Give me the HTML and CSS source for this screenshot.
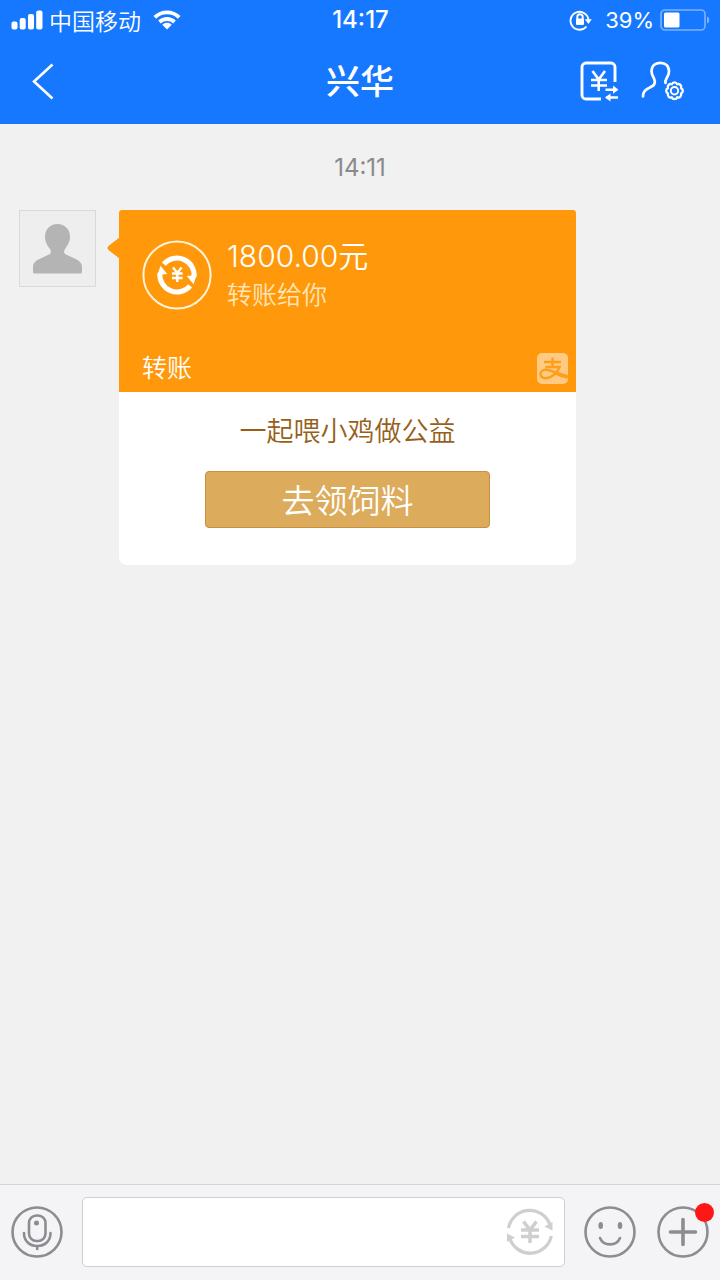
FILE: index.html
```html
<!DOCTYPE html>
<html lang="zh-CN">
<head>
<meta charset="utf-8">
<meta name="viewport" content="width=device-width, initial-scale=1">
<title>兴华</title>
<link rel="stylesheet" href="styles.css">
</head>
<body>
<div class="app">
  <header class="header">
    <div class="status">
      <div class="status-left">
        <svg class="icon" width="32" height="20" viewBox="0 0 32 20" fill="#fff" aria-hidden="true">
          <rect x="0.5" y="11.5" width="6" height="8" rx="2"/><rect x="8.7" y="8" width="6" height="11.5" rx="2"/><rect x="17" y="4" width="6" height="15.5" rx="2"/><rect x="25.2" y="0.5" width="6.3" height="19" rx="2"/>
        </svg>
        <span class="carrier">中国移动</span>
        <svg class="icon wifi" width="28" height="20" viewBox="0 0 28 20" aria-hidden="true">
          <g fill="none" stroke="#fff" stroke-width="3.8"><path d="M1.8 7.3C8.5.6 19.500.6 26.200 7.300"/><path d="M6.500 12C10.700 8 17.300 8 21.500 12"/></g>
          <path d="M9.300 14.700c2.700-2.500 6.700-2.500 9.400 0L14 19.600z" fill="#fff"/>
        </svg>
      </div>
      <time class="clock">14:17</time>
      <div class="status-right">
        <svg class="icon" width="24" height="22" viewBox="0 0 24 22" aria-hidden="true">
          <g fill="none" stroke="#fff" stroke-width="1.900"><path d="M17.500 17.500A9 9 0 1 1 19.500 11"/><path d="M8.300 10.500V8a2.700 2.700 0 0 1 5.400 0v2.500"/></g>
          <rect x="7" y="9.500" width="8" height="6.500" rx="1" fill="#fff"/><path d="M15.800 10.300h7L19.500 15z" fill="#fff"/>
        </svg>
        <span class="percent">39%</span>
        <svg class="icon" width="50" height="22" viewBox="0 0 50 22" aria-hidden="true">
          <rect x="1" y="1" width="44" height="20" rx="4" fill="none" stroke="#7db3ff" stroke-width="1.600"/>
          <rect x="4" y="3.500" width="15.500" height="15" rx="1.500" fill="#fff"/><path d="M47 7.500c3 1 3 6 0 7z" fill="#7db3ff"/>
        </svg>
      </div>
    </div>
    <nav class="nav">
      <button class="plain back" type="button" aria-label="返回">
        <svg class="icon" width="24" height="38" viewBox="0 0 24 38" fill="none" stroke="#fff" stroke-width="2.600" aria-hidden="true"><path d="M21.500 1.500L3 18.500l18.500 17"/></svg>
      </button>
      <h1 class="title">兴华</h1>
      <div class="nav-actions">
        <button class="plain" type="button" aria-label="转账记录">
          <svg class="icon" width="40" height="42" viewBox="0 0 40 42" fill="none" stroke="#fff" stroke-width="2.900" aria-hidden="true">
            <path d="M35 21V6a4 4 0 0 0-4-4H6a4 4 0 0 0-4 4v28a4 4 0 0 0 4 4h15"/>
            <path d="M12.500 10l6.200 8.500L25 10M18.700 18v12M11 19h16M11 24.500h16" stroke-width="2.600"/>
            <path d="M25.500 28.800H36M26 36.500h12" stroke-width="2.500"/><path d="M33 24.500l5.500 4.300-5.500 4zM30.500 32.500L25 36.500l5.500 4z" fill="#fff" stroke="none"/>
          </svg>
        </button>
        <button class="plain" type="button" aria-label="聊天设置">
          <svg class="icon" width="44" height="42" viewBox="0 0 44 42" fill="none" stroke="#fff" stroke-width="2.700" stroke-linecap="round" stroke-linejoin="round" aria-hidden="true">
            <path d="M2 35.500C2 31.500 3 30 6 28.200L11.500 25C14 23.500 14.300 20.500 13 17.500C11.500 15 10.500 12.500 10.500 10C10.500 5 14 1.800 19.200 1.800S28 5 28 10.500C28 13.500 26.800 15.500 25.500 17.500C24.500 19.200 24.200 20.500 24.500 22"/>
            <g transform="translate(33.500 29.800)"><path d="M6.500-2.700A2.900 2.900 0 0 1 6.500 2.700A2.900 2.900 0 0 1 2.700 6.500A2.900 2.900 0 0 1-2.700 6.500A2.900 2.900 0 0 1-6.500 2.700A2.900 2.900 0 0 1-6.500-2.700A2.900 2.900 0 0 1-2.700-6.500A2.900 2.900 0 0 1 2.700-6.500A2.900 2.900 0 0 1 6.500-2.700z" stroke-width="2.300"/><circle r="3.700" stroke-width="2"/></g>
          </svg>
        </button>
      </div>
    </nav>
  </header>

  <main class="chat">
    <time class="stamp">14:11</time>
    <article class="message">
      <div class="avatar">
        <svg class="icon" width="49" height="50" viewBox="0 0 49 50" fill="#b4b4b4" role="img" aria-label="头像"><path d="M24.500 0C32 0 37 5.500 37 13c0 5-2.500 8.500-5 12-1.500 2.300-1.200 4.500 1 5.500l9 4.200c4.500 2 7 4.300 7 8.300v4.500c0 1.500-.7 2-2 2H2c-1.300 0-2-.5-2-2V43c0-4 2.500-6.300 7-8.300l9-4.200c2.200-1 2.500-3.200 1-5.500-2.500-3.500-5-7-5-12C12 5.500 17 0 24.500 0z"/></svg>
      </div>
      <div class="card">
        <svg class="tail" width="13" height="22" viewBox="0 0 13 22" fill="#ff990b" aria-hidden="true"><path d="M13 0v22L1.500 13Q-.5 11 1.500 9z"/></svg>
        <section class="transfer">
          <div class="transfer-main">
            <svg class="icon" width="70" height="70" viewBox="0 0 70 70" fill="none" stroke="#fff" aria-hidden="true">
              <circle cx="35" cy="35" r="33.600" stroke="#fff4da" stroke-width="2"/>
              <path d="M21.800 24.200A17.200 17.200 0 0 1 52.100 37M48.200 45.800A17.200 17.200 0 0 1 17.900 33" stroke-width="5"/>
              <path d="M44.800 36l6.700 8.300L54.600 35zM25.200 34l-6.700-8.300L15.400 35z" fill="#fff" stroke="none"/>
              <path d="M31 27.500l4.300 5.500 4.300-5.500M35.300 33v9M30 33.500h10.600M30 38h10.600" stroke-width="2.300"/>
            </svg>
            <div class="transfer-text">
              <p class="amount">1800.00元</p>
              <p class="note">转账给你</p>
            </div>
          </div>
          <div class="transfer-foot">
            <span>转账</span>
            <svg class="icon" width="31" height="31" viewBox="0 0 31 31" role="img" aria-label="支付宝">
              <rect width="31" height="31" rx="5" fill="#ffcb82"/>
              <g fill="none" stroke="#ff9e1a" stroke-width="2.400"><path d="M7 9h17M15.500 4.500v9.500M8.500 14h14C21 18.500 15.500 25 9 25.200C1.500 25.500 2 17 8.500 16.800C13 16.700 17 19 21 21"/><path d="M18 19.500c4 2 8 3.300 13 4.500" stroke-width="3.800"/></g>
            </svg>
          </div>
        </section>
        <section class="promo">
          <p class="promo-text">一起喂小鸡做公益</p>
          <button class="promo-button" type="button">去领饲料</button>
        </section>
      </div>
    </article>
  </main>

  <footer class="composer">
    <button class="plain" type="button" aria-label="语音">
      <svg class="icon" width="52" height="52" viewBox="0 0 52 52" fill="none" stroke="#8c8c91" stroke-width="2.600" stroke-linecap="round" aria-hidden="true">
        <circle cx="26" cy="26" r="24.500"/><rect x="18" y="9.500" width="16.500" height="25.500" rx="7.500"/><path d="M13 27c0 8 5.500 13 13.200 13S39.500 35 39.500 27M26.200 40v3"/><circle cx="25.500" cy="17" r="1.200" fill="#8c8c91"/>
      </svg>
    </button>
    <div class="field">
      <input class="field-input" type="text" aria-label="输入消息">
      <button class="plain" type="button" aria-label="转账">
        <svg class="icon" width="46" height="48" viewBox="0 0 46 48" fill="none" stroke="#cfcfcf" aria-hidden="true">
          <path d="M1.500 20A21.500 21.500 0 0 1 43 17M44.300 28A21.500 21.500 0 0 1 3 31" stroke-width="3.300"/><path d="M37.500 18.500l8 4V14zM8 29.500l-8-4V34z" fill="#cfcfcf" stroke="none"/>
          <path d="M16.500 13.500l6.500 8.500 6.500-8.500M23 22v13M14 22h18M14 28.500h18" stroke-width="3.500"/>
        </svg>
      </button>
    </div>
    <div class="tools">
      <button class="plain" type="button" aria-label="表情">
        <svg class="icon" width="52" height="52" viewBox="0 0 52 52" fill="none" stroke="#8c8c91" stroke-width="2.600" stroke-linecap="round" aria-hidden="true"><circle cx="26" cy="26" r="24.500"/><path d="M16 32c3.500 8.500 16.500 8.500 20 0"/><ellipse cx="16.700" cy="19.500" rx="2.300" ry="3.500" fill="#8c8c91" stroke="none"/><ellipse cx="36" cy="19.500" rx="2.300" ry="3.500" fill="#8c8c91" stroke="none"/></svg>
      </button>
      <button class="plain more" type="button" aria-label="更多">
        <svg class="icon" width="52" height="52" viewBox="0 0 52 52" fill="none" stroke="#8c8c91" stroke-width="2.600" stroke-linecap="round" aria-hidden="true"><circle cx="26" cy="26" r="24.500"/><path d="M13.500 26h25M26 13.500v25" stroke-width="3.600"/></svg>
        <span class="badge"></span>
      </button>
    </div>
  </footer>
</div>
</body>
</html>
```

FILE: styles.css
```css
* {
  box-sizing: border-box;
}

body,
h1,
p {
  margin: 0;
}

body {
  font-family: Inter, "Noto Sans CJK SC", sans-serif;
  background: #f1f1f1;
}

.app {
  display: flex;
  flex-direction: column;
  min-height: 100vh;
}

.icon {
  display: block;
  flex: none;
}

.plain {
  display: block;
  padding: 0;
  border: 0;
  background: none;
  cursor: pointer;
}

.header {
  color: #fff;
  background: #1677ff;
}

.status,
.nav {
  display: grid;
  grid-template-columns: 1fr auto 1fr;
  align-items: center;
}

.status {
  height: 40px;
  padding: 0 10px 0 11px;
  font-size: 23px;
  line-height: 40px;
}

.status-left,
.status-right {
  display: flex;
  align-items: center;
}

.carrier {
  margin-left: 6px;
  font-family: "Noto Sans CJK SC", sans-serif;
  font-weight: 350;
}

.wifi {
  margin-left: 12px;
}

.clock {
  font-size: 24px;
  font-weight: 500;
}

.status-right {
  justify-content: flex-end;
}

.percent {
  margin: 0 6px 0 12px;
  font-size: 22px;
}

.nav {
  height: 84px;
  padding: 0 31px;
}

.back {
  justify-self: start;
}

.title {
  font-size: 34px;
  font-weight: 500;
  line-height: 48px;
}

.nav-actions {
  display: flex;
  justify-content: flex-end;
  gap: 21px;
  padding-right: 4px;
}

.chat {
  flex: 1;
  padding: 28px 19px;
}

.stamp {
  display: block;
  margin-bottom: 26px;
  color: #8a8a8a;
  font-size: 24px;
  line-height: 32px;
  text-align: center;
}

.message {
  display: flex;
  align-items: flex-start;
  gap: 23px;
}

.avatar {
  display: grid;
  flex: none;
  place-items: center;
  width: 77px;
  height: 77px;
  border: 1px solid #d9d9d9;
  background: #eee;
}

.card {
  position: relative;
  flex: 0 1 457px;
  border-radius: 3px 3px 8px 8px;
  background: #fff;
}

.tail {
  position: absolute;
  top: 27px;
  left: -12px;
}

.transfer {
  padding: 25px 8px 6px 23px;
  border-radius: 3px 3px 0 0;
  color: #fff;
  background: #ff990b;
}

.transfer-main {
  display: flex;
  align-items: center;
  gap: 15px;
}

.transfer-text {
  padding-top: 2px;
  font-weight: 350;
}

.amount {
  font-size: 30px;
  line-height: 38px;
}

.note {
  color: #ffe5b8;
  font-size: 25px;
  line-height: 40px;
}

.transfer-foot {
  display: flex;
  align-items: center;
  justify-content: space-between;
  margin-top: 35px;
  font-size: 25px;
  font-weight: 350;
  line-height: 36px;
}

.promo {
  display: flex;
  flex-direction: column;
  align-items: center;
  gap: 19px;
  padding: 20px 0 37px;
}

.promo-text {
  color: #96601a;
  font-size: 27px;
  font-weight: 350;
  line-height: 40px;
}

.promo-button {
  width: 285px;
  max-width: 90%;
  padding: 0;
  border: 1px solid #c8903c;
  border-radius: 4px;
  color: #fff;
  background: #dcab5b;
  font-family: "Noto Sans CJK SC", sans-serif;
  font-size: 33px;
  font-weight: 350;
  line-height: 55px;
}

.composer {
  display: flex;
  align-items: center;
  gap: 19px;
  padding: 12px 11px 13px;
  border-top: 1px solid #d4d4d8;
  background: #f4f4f7;
}

.field {
  display: flex;
  flex: 1;
  align-items: center;
  min-width: 0;
  height: 70px;
  padding-right: 11px;
  border: 1px solid #cdcdd2;
  border-radius: 5px;
  background: #fff;
}

.field-input {
  flex: 1;
  min-width: 0;
  height: 100%;
  padding: 0 16px;
  border: 0;
  outline: 0;
  background: transparent;
  font: inherit;
  font-size: 28px;
}

.tools {
  display: flex;
  gap: 21px;
}

.more {
  position: relative;
}

.badge {
  position: absolute;
  top: -3px;
  right: -5px;
  width: 19px;
  height: 19px;
  border-radius: 50%;
  background: #ff1616;
}
```
